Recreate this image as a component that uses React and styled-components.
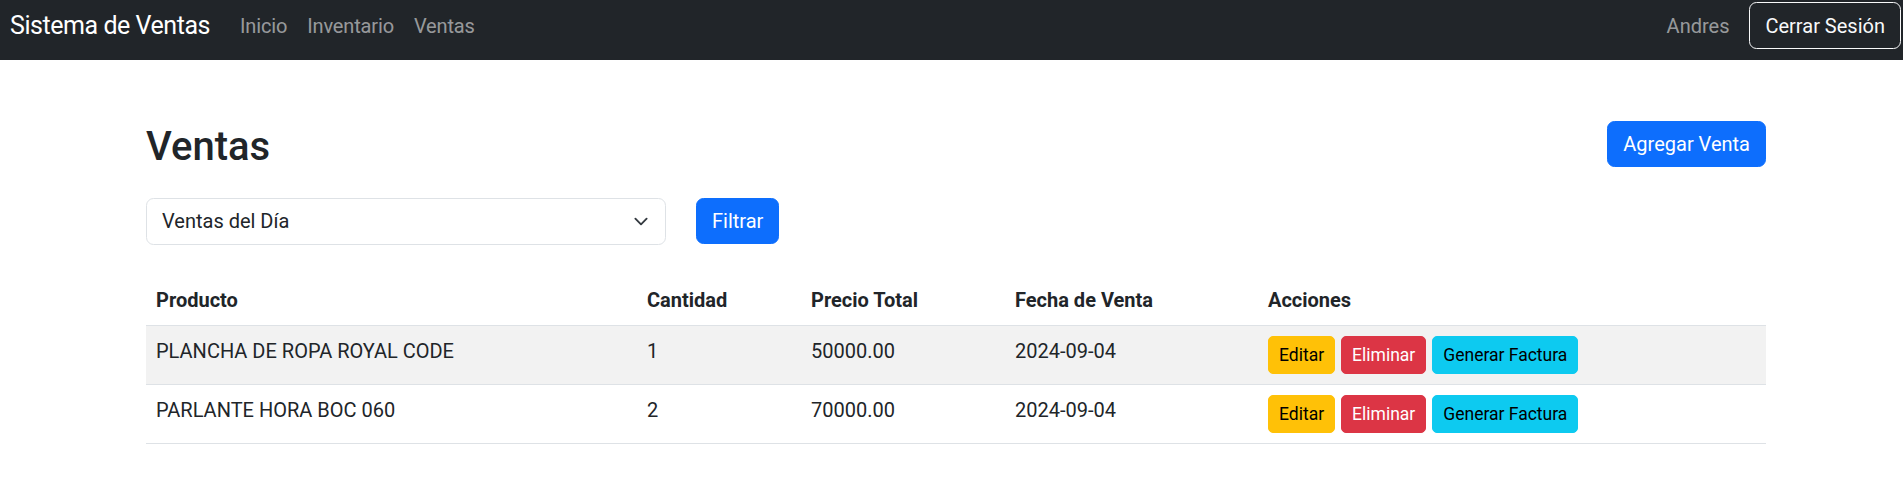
import React from "react";
import styled, { createGlobalStyle } from "styled-components";

const GlobalStyle = createGlobalStyle`
  * { box-sizing: border-box; }
  body {
    margin: 0;
    font-family: Roboto, "Segoe UI", "Liberation Sans", sans-serif;
    font-size: 20px;
    line-height: 1.5;
    color: #212529;
    background: #fff;
  }
`;

const Navbar = styled.nav`
  display: flex;
  align-items: center;
  height: 60px;
  padding: 2px 2px 11px 10px;
  background: #212529;
`;

const Brand = styled.a`
  font-size: 25px;
  line-height: 37.5px;
  letter-spacing: -0.45px;
  color: #fff;
  text-decoration: none;
  margin-right: 20px;
`;

const NavList = styled.div`
  display: flex;
  align-items: center;
`;

const NavLink = styled.a`
  padding: 0 10px;
  font-size: 20px;
  letter-spacing: -0.15px;
  color: rgba(255, 255, 255, 0.55);
  text-decoration: none;
`;

const NavRight = styled.div`
  margin-left: auto;
  display: flex;
  align-items: center;
`;

const UserName = styled.span`
  color: rgba(255, 255, 255, 0.55);
  margin-right: 20px;
`;

const OutlineButton = styled.button`
  font-family: inherit;
  font-size: 20px;
  line-height: 30px;
  padding: 7.5px 15px;
  color: #f8f9fa;
  background: transparent;
  border: 1px solid #f8f9fa;
  border-radius: 7.5px;
`;

const Container = styled.main`
  width: 1620px;
  margin: 60px 0 0 146px;
`;

const Header = styled.div`
  display: flex;
  align-items: center;
  justify-content: space-between;
  margin-bottom: 30px;
`;

const Title = styled.h2`
  margin: 0;
  padding-top: 6px;
  font-size: 40px;
  font-weight: 500;
  line-height: 42px;
`;

const Button = styled.button`
  font-family: inherit;
  font-size: ${(p) => (p.$small ? "17.5px" : "20px")};
  line-height: 1.5;
  padding: ${(p) => (p.$small ? "5px 10px" : "7px 15px")};
  border-radius: ${(p) => (p.$small ? "5px" : "7.5px")};
  border: 1px solid ${(p) => p.$bg};
  background: ${(p) => p.$bg};
  color: ${(p) => p.$fg};
  white-space: nowrap;
`;

const FilterRow = styled.div`
  display: flex;
  align-items: center;
  gap: 30px;
  margin-bottom: 30px;
`;

const SelectWrap = styled.div`
  position: relative;
  width: 520px;
`;

const Select = styled.select`
  appearance: none;
  display: block;
  width: 100%;
  height: 46.5px;
  font-family: inherit;
  font-size: 20px;
  line-height: 30px;
  color: #212529;
  background: #fff;
  padding: 7px 45px 7px 15px;
  border: 1px solid #dee2e6;
  border-radius: 7.5px;
`;

const Chevron = styled.svg`
  position: absolute;
  right: 15px;
  top: 16px;
  pointer-events: none;
`;

const Table = styled.table`
  width: 100%;
  border-collapse: collapse;
  table-layout: fixed;
  vertical-align: top;
`;

const Th = styled.th`
  text-align: left;
  font-weight: 700;
  padding: 10px;
  border-bottom: 1px solid #dee2e6;
`;

const Tr = styled.tr`
  background: ${(p) => (p.$striped ? "#f2f2f2" : "#fff")};
`;

const Td = styled.td`
  padding: 10px;
  border-bottom: 1px solid #dee2e6;
  vertical-align: top;
`;

const Actions = styled.div`
  display: flex;
  gap: 6px;
`;

const ventas = [
  { producto: "PLANCHA DE ROPA ROYAL CODE", cantidad: 1, total: "50000.00", fecha: "2024-09-04" },
  { producto: "PARLANTE HORA BOC 060", cantidad: 2, total: "70000.00", fecha: "2024-09-04" },
];

export default function App() {
  return (
    <>
      <GlobalStyle />
      <Navbar>
        <Brand href="#">Sistema de Ventas</Brand>
        <NavList>
          <NavLink href="#">Inicio</NavLink>
          <NavLink href="#">Inventario</NavLink>
          <NavLink href="#">Ventas</NavLink>
        </NavList>
        <NavRight>
          <UserName>Andres</UserName>
          <OutlineButton>Cerrar Sesión</OutlineButton>
        </NavRight>
      </Navbar>
      <Container>
        <Header>
          <Title>Ventas</Title>
          <Button $bg="#0d6efd" $fg="#fff">Agregar Venta</Button>
        </Header>
        <FilterRow>
          <SelectWrap>
            <Select defaultValue="dia">
              <option value="dia">Ventas del Día</option>
              <option value="mes">Ventas del Mes</option>
            </Select>
            <Chevron width="20" height="15" viewBox="0 0 16 16">
              <path d="m2 5 6 6 6-6" fill="none" stroke="#343a40" strokeWidth="2" strokeLinecap="round" strokeLinejoin="round" />
            </Chevron>
          </SelectWrap>
          <Button $bg="#0d6efd" $fg="#fff">Filtrar</Button>
        </FilterRow>
        <Table>
          <colgroup>
            <col style={{ width: 491 }} />
            <col style={{ width: 164 }} />
            <col style={{ width: 204 }} />
            <col style={{ width: 253 }} />
            <col />
          </colgroup>
          <thead>
            <tr>
              <Th>Producto</Th>
              <Th>Cantidad</Th>
              <Th>Precio Total</Th>
              <Th>Fecha de Venta</Th>
              <Th>Acciones</Th>
            </tr>
          </thead>
          <tbody>
            {ventas.map((v, i) => (
              <Tr key={i} $striped={i % 2 === 0}>
                <Td>{v.producto}</Td>
                <Td>{v.cantidad}</Td>
                <Td>{v.total}</Td>
                <Td>{v.fecha}</Td>
                <Td>
                  <Actions>
                    <Button $small $bg="#ffc107" $fg="#000">Editar</Button>
                    <Button $small $bg="#dc3545" $fg="#fff">Eliminar</Button>
                    <Button $small $bg="#0dcaf0" $fg="#000">Generar Factura</Button>
                  </Actions>
                </Td>
              </Tr>
            ))}
          </tbody>
        </Table>
      </Container>
    </>
  );
}
